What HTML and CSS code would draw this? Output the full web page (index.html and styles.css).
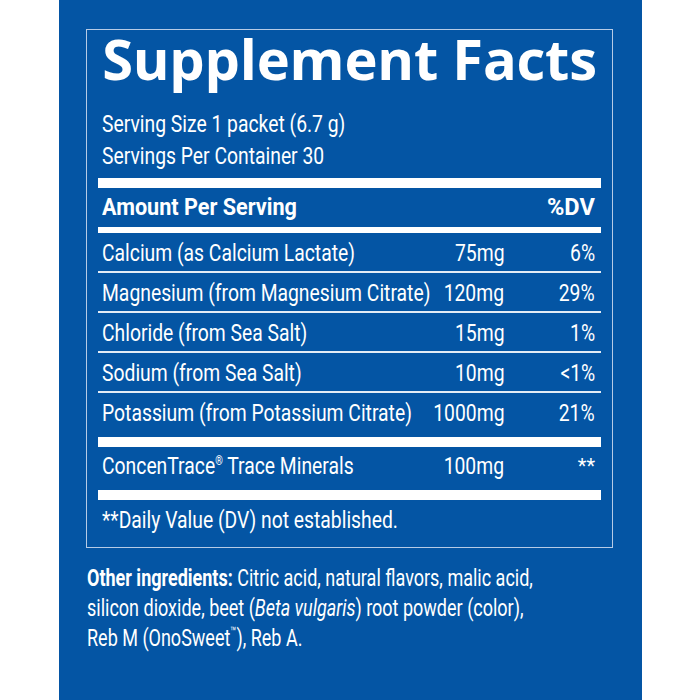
FILE: index.html
```html
<!DOCTYPE html>
<html lang="en">
<head>
<meta charset="utf-8">
<title>Supplement Facts</title>
<link rel="stylesheet" href="styles.css">
</head>
<body>
<div class="panel">
  <section class="facts">
    <h1 class="title">Supplement Facts</h1>
    <div class="serving">
      <div><span class="t">Serving Size 1 packet (6.7 g)</span></div>
      <div><span class="t">Servings Per Container 30</span></div>
    </div>
    <div class="bar"></div>
    <div class="row head">
      <span class="name"><span class="t">Amount Per Serving</span></span>
      <span class="amt"></span>
      <span class="dv"><span class="t">%DV</span></span>
    </div>
    <div class="bar thin"></div>
    <div class="row line">
      <span class="name"><span class="t">Calcium (as Calcium Lactate)</span></span>
      <span class="amt"><span class="t">75mg</span></span>
      <span class="dv"><span class="t">6%</span></span>
    </div>
    <div class="row line">
      <span class="name"><span class="t">Magnesium (from Magnesium Citrate)</span></span>
      <span class="amt"><span class="t">120mg</span></span>
      <span class="dv"><span class="t">29%</span></span>
    </div>
    <div class="row line">
      <span class="name"><span class="t">Chloride (from Sea Salt)</span></span>
      <span class="amt"><span class="t">15mg</span></span>
      <span class="dv"><span class="t">1%</span></span>
    </div>
    <div class="row line">
      <span class="name"><span class="t">Sodium (from Sea Salt)</span></span>
      <span class="amt"><span class="t">10mg</span></span>
      <span class="dv"><span class="t">&lt;1%</span></span>
    </div>
    <div class="row last">
      <span class="name"><span class="t">Potassium (from Potassium Citrate)</span></span>
      <span class="amt"><span class="t">1000mg</span></span>
      <span class="dv"><span class="t">21%</span></span>
    </div>
    <div class="bar"></div>
    <div class="row trace">
      <span class="name"><span class="t">ConcenTrace<sup class="mark">®</sup> Trace Minerals</span></span>
      <span class="amt"><span class="t">100mg</span></span>
      <span class="dv"><span class="t stars">**</span></span>
    </div>
    <div class="bar"></div>
    <p class="note"><span class="t">**Daily Value (DV) not established.</span></p>
  </section>
  <p class="ingredients">
    <span class="ln"><b>Other ingredients:</b> Citric acid, natural flavors, malic acid,</span>
    <span class="ln">silicon dioxide, beet (<i>Beta vulgaris</i>) root powder (color),</span>
    <span class="ln">Reb M (OnoSweet<sup class="tm">™</sup>), Reb A.</span>
  </p>
</div>
</body>
</html>
```

FILE: styles.css
```css
html, body {
  margin: 0;
  padding: 0;
  background: #ffffff;
}

body {
  font-family: Roboto, "Liberation Sans", sans-serif;
  color: #ffffff;
}

.panel {
  width: 583px;
  height: 700px;
  margin-left: 59px;
  background: #0455a4;
  padding-top: 29px;
  box-sizing: border-box;
  overflow: hidden;
}

.facts {
  margin-left: 27px;
  width: 527px;
  box-sizing: border-box;
  border: 1px solid #b7cbe6;
  padding: 0 11px 7px 11px;
}

.title {
  margin: 0;
  font-family: "Open Sans", sans-serif;
  font-weight: 700;
  font-size: 56px;
  line-height: 56px;
  text-align: center;
  letter-spacing: -0.2px;
}

/* condensed text: the label face is a narrow sans */
.t {
  display: inline-block;
  white-space: nowrap;
  transform: scaleX(0.805);
  transform-origin: left center;
}

.serving {
  margin-top: 22px;
  margin-bottom: 6px;
  padding-left: 4px;
  font-size: 24px;
  line-height: 32px;
}

.bar {
  height: 10px;
  background: #ffffff;
}

.bar.thin {
  height: 6px;
}

.row {
  display: grid;
  grid-template-columns: minmax(0, 1fr) 90px 91px;
  align-items: start;
  font-size: 24px;
  line-height: 32px;
  padding-left: 4px;
  padding-right: 6px;
  box-sizing: border-box;
}

.row .amt,
.row .dv {
  text-align: right;
  white-space: nowrap;
}

.row .amt .t,
.row .dv .t {
  transform-origin: right center;
}

.row .name {
  white-space: nowrap;
}

.row.head {
  font-weight: 700;
  height: 39px;
  line-height: 39px;
}

.row.head .t {
  transform: scaleX(0.9);
}

.row.head .dv .t {
  transform: scaleX(0.98);
}

.row.line {
  height: 40px;
  padding-top: 4px;
  border-bottom: 2px solid #e4ecf6;
}

.row.last {
  height: 44px;
  padding-top: 4px;
}

.row.trace {
  height: 43px;
  line-height: 36px;
  padding-top: 1px;
}

.mark {
  font-size: 12px;
  line-height: 0;
  vertical-align: 9px;
}

.row .stars {
  font-size: 20px;
  transform: scaleX(1);
  vertical-align: 4px;
}

.note {
  margin: 0;
  padding-left: 4px;
  font-size: 24px;
  line-height: 40px;
}

.ingredients {
  margin: 15px 0 0 28px;
  font-size: 24px;
  line-height: 30px;
}

.ln {
  display: block;
  white-space: nowrap;
  transform: scaleX(0.75);
  transform-origin: left center;
}

.ingredients b {
  font-weight: 700;
}

.tm {
  font-size: 13px;
  line-height: 0;
  vertical-align: 10px;
}
```
